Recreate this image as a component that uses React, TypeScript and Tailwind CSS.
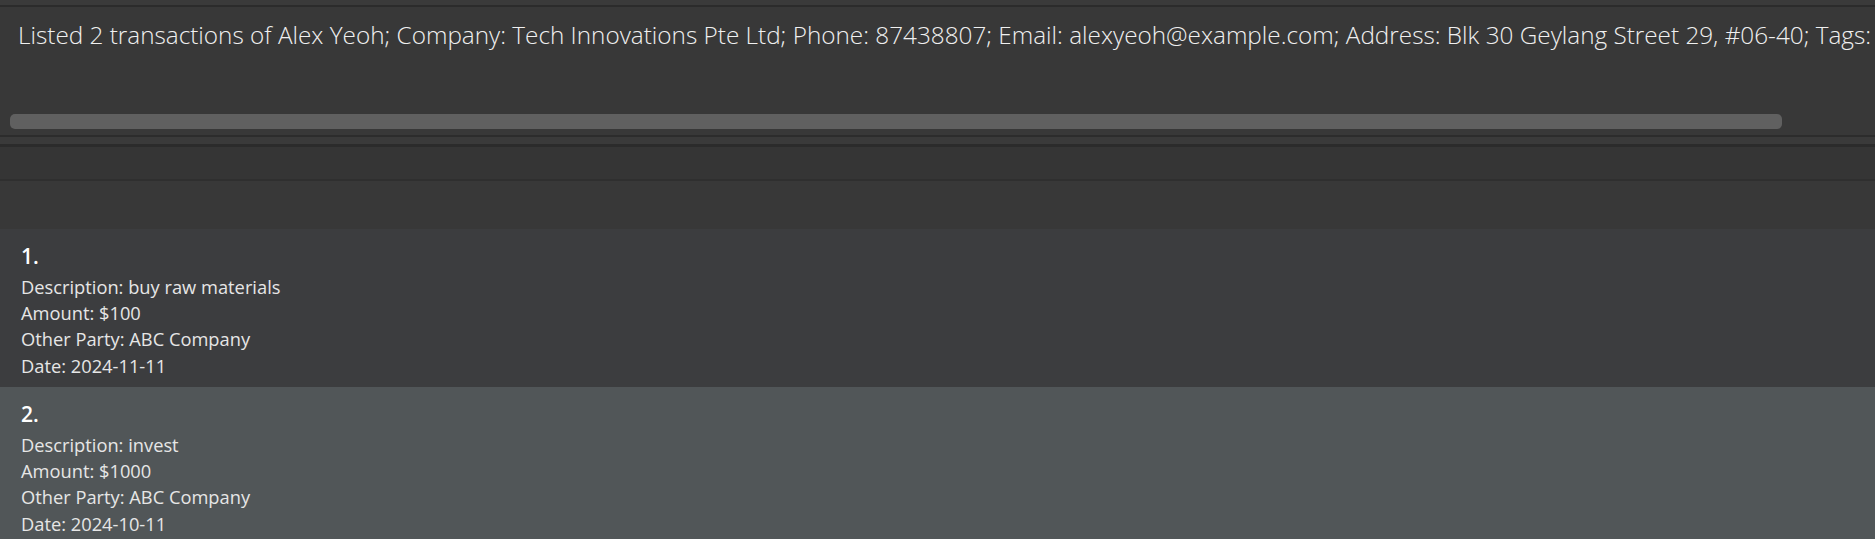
import React from 'react';

interface Transaction {
  description: string;
  amount: string;
  otherParty: string;
  date: string;
}

const transactions: Transaction[] = [
  { description: 'buy raw materials', amount: '$100', otherParty: 'ABC Company', date: '2024-11-11' },
  { description: 'invest', amount: '$1000', otherParty: 'ABC Company', date: '2024-10-11' },
];

const resultText =
  'Listed 2 transactions of Alex Yeoh; Company: Tech Innovations Pte Ltd; Phone: 87438807; Email: alexyeoh@example.com; Address: Blk 30 Geylang Street 29, #06-40; Tags:';

const TransactionCard: React.FC<{ index: number; tx: Transaction }> = ({ index, tx }) => (
  <div
    className={`flex flex-col px-[21px] pt-[12px] h-[158px] ${
      index % 2 === 0 ? 'bg-[#3c3d3f]' : 'bg-[#515658]'
    }`}
  >
    <div className="text-[21px] font-semibold leading-[30px] text-white">{index + 1}.</div>
    <div className="text-[18.3px] leading-[26.2px] text-[#e6e6e6] mt-[3px]">
      <div>Description: {tx.description}</div>
      <div>Amount: {tx.amount}</div>
      <div>Other Party: {tx.otherParty}</div>
      <div>Date: {tx.date}</div>
    </div>
  </div>
);

export default function App() {
  return (
    <div className="w-[1875px] h-[539px] overflow-hidden bg-[#383838] font-['Open_Sans',sans-serif]">
      <div className="h-[5px] bg-[#3a3a3a]" />
      <div className="h-[2px] bg-[#2b2b2b]" />
      {/* result display */}
      <div className="h-[128px] bg-[#383838] flex flex-col">
        <div className="pl-[18px] pt-[12px] h-[107px] overflow-hidden whitespace-nowrap">
          <span className="text-[24.3px] font-light text-[#f0f0f0] leading-[32px]">{resultText}</span>
        </div>
        <div className="px-[10px]">
          <div className="w-[1772px] h-[15px] rounded-[5px] bg-[#606060]" />
        </div>
      </div>
      <div className="h-[2px] bg-[#2c2c2c]" />
      <div className="h-[7px] bg-[#3a3a3a]" />
      <div className="h-[3px] bg-[#2b2b2b]" />
      <div className="h-[32px] bg-[#353535]" />
      <div className="h-[2px] bg-[#2f2f2f]" />
      <div className="h-[48px] bg-[#383838]" />
      <div className="flex flex-col">
        {transactions.map((tx, i) => (
          <TransactionCard key={i} index={i} tx={tx} />
        ))}
      </div>
    </div>
  );
}
